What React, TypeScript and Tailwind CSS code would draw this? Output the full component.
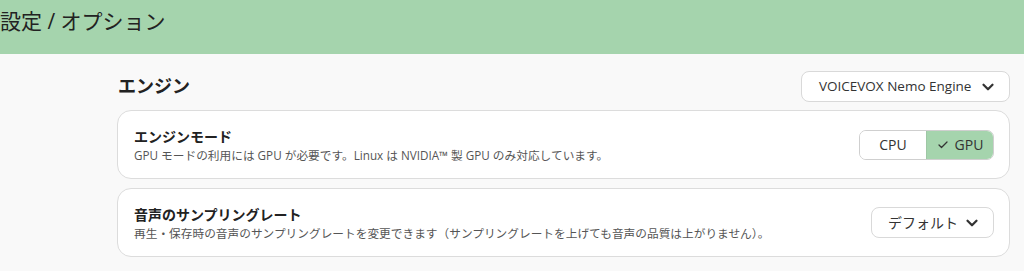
import { Check, ChevronDown } from "lucide-react"

const font = { fontFamily: '"Open Sans", "Noto Sans CJK JP", sans-serif' }

function Select({ label, className = "" }: { label: string; className?: string }) {
  return (
    <button
      type="button"
      className={`flex items-center justify-between rounded-[8px] border border-[#d9d9d9] bg-white text-[#333] ${className}`}
    >
      <span>{label}</span>
      <ChevronDown className="h-[18px] w-[18px]" strokeWidth={3} />
    </button>
  )
}

function SettingCard({
  title,
  desc,
  children,
}: {
  title: string
  desc: string
  children: React.ReactNode
}) {
  return (
    <div className="flex h-[69px] items-center justify-between rounded-[14px] border border-[#dcdcdc] bg-white pl-[16px] pr-[15px]">
      <div className="flex flex-col">
        <div className="text-[14px] font-bold leading-[20px] text-[#222]">{title}</div>
        <div className="text-[11.7px] leading-[16px] text-[#555]">{desc}</div>
      </div>
      {children}
    </div>
  )
}

export default function App() {
  return (
    <div className="min-h-[271px] w-[1024px] bg-[#f9f9f9]" style={font}>
      <div className="flex h-[54px] items-start bg-[#a5d4ad] pt-[6px]">
        <h1 className="text-[21px] leading-[30px] text-[#222]">設定 / オプション</h1>
      </div>
      <div className="pl-[117px] pr-[14px] pt-[17px]">
        <div className="mb-[8px] flex items-center justify-between">
          <h2 className="pl-px text-[18px] font-bold text-[#222]">エンジン</h2>
          <Select label="VOICEVOX Nemo Engine" className="h-[31px] w-[209px] pl-[17px] pr-[12px] text-[13.5px]" />
        </div>
        <div className="flex flex-col gap-[9px]">
          <SettingCard
            title="エンジンモード"
            desc="GPU モードの利用には GPU が必要です。Linux は NVIDIA™ 製 GPU のみ対応しています。"
          >
            <div className="flex h-[30px] overflow-hidden rounded-[7px] border border-[#cfcfcf] text-[14px] text-[#333]">
              <div className="flex w-[66px] items-center justify-center bg-white">CPU</div>
              <div className="flex w-[67px] items-center justify-center gap-[6px] border-l border-[#9ec7a5] bg-[#a5d4ad]">
                <Check className="h-[12px] w-[12px]" strokeWidth={2.5} />
                <span>GPU</span>
              </div>
            </div>
          </SettingCard>
          <SettingCard
            title="音声のサンプリングレート"
            desc="再生・保存時の音声のサンプリングレートを変更できます（サンプリングレートを上げても音声の品質は上がりません）。"
          >
            <Select label="デフォルト" className="h-[31px] w-[123px] pl-[16px] pr-[12px] text-[14px]" />
          </SettingCard>
        </div>
      </div>
    </div>
  )
}
